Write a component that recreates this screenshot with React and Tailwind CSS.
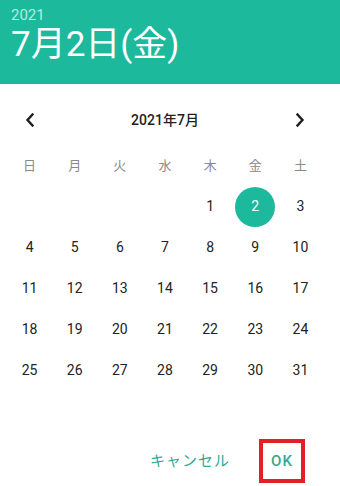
import React from "react";

const font = { fontFamily: "Roboto, 'Noto Sans CJK JP', sans-serif" };

export default function App() {
  const weekdays = ["日", "月", "火", "水", "木", "金", "土"];
  const cells = [];
  for (let i = 0; i < 4; i++) cells.push(null);
  for (let d = 1; d <= 31; d++) cells.push(d);
  while (cells.length % 7) cells.push(null);

  return (
    <div className="w-[340px] h-[486px] bg-white overflow-hidden" style={font}>
      <div className="h-[84px] bg-[#1cb99d] px-[11px] pt-[6px]">
        <div className="text-[15px] leading-[18px] text-[#b5ede2]">2021</div>
        <div className="text-[35px] leading-[42px] text-white">7月2日(金)</div>
      </div>

      <div className="pl-[7px] w-[323px]">
        <div className="mt-[16px] h-[40px] flex items-center justify-between">
          <div className="w-[45px] flex justify-center">
            <svg width="10" height="14" viewBox="0 0 10 14">
              <path d="M7.5 1.5 L2.5 7 L7.5 12.5" fill="none" stroke="#1f1f1f" strokeWidth="2.4" strokeLinecap="square" />
            </svg>
          </div>
          <div className="text-[14px] font-medium text-[#212121]">2021年7月</div>
          <div className="w-[45px] flex justify-center">
            <svg width="10" height="14" viewBox="0 0 10 14">
              <path d="M2.5 1.5 L7.5 7 L2.5 12.5" fill="none" stroke="#1f1f1f" strokeWidth="2.4" strokeLinecap="square" />
            </svg>
          </div>
        </div>

        <div className="mt-[6px] grid grid-cols-7 h-[40px] items-center">
          {weekdays.map((w) => (
            <div key={w} className="text-center text-[13px] text-[#8a8a8a]">{w}</div>
          ))}
        </div>

        <div className="grid grid-cols-7">
          {cells.map((d, i) => (
            <div key={i} className="h-[41px] flex items-center justify-center">
              {d === 2 ? (
                <div className="w-[40px] h-[40px] rounded-full bg-[#1cb99d] text-white flex items-center justify-center text-[14px]">2</div>
              ) : (
                <span className="text-[14px] text-[#222222]">{d ?? ""}</span>
              )}
            </div>
          ))}
        </div>
      </div>

      <div className="mt-[48px] flex justify-end items-center pr-[35px]">
        <div className="text-[15px] tracking-[1px] text-[#35a892] mr-[29px]">キャンセル</div>
        <div className="w-[46px] h-[44px] border-[4px] border-[#e1202b] flex items-center justify-center">
          <span className="text-[15px] font-medium tracking-[1px] text-[#35a892]">OK</span>
        </div>
      </div>
    </div>
  );
}
